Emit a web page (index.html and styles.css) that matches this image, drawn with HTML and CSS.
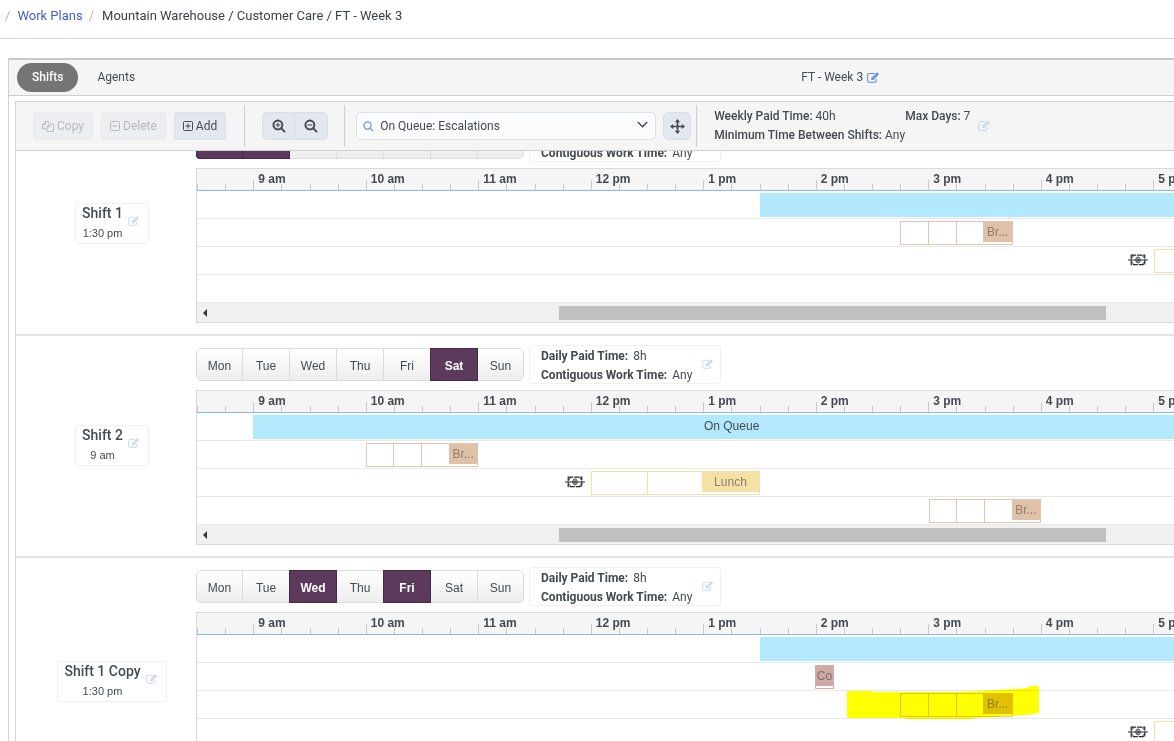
FILE: index.html
```html
<!DOCTYPE html>
<html lang="en">
<head>
<meta charset="utf-8">
<title>Work Plans</title>
<link rel="stylesheet" href="styles.css">
</head>
<body>
<svg class="sprite" aria-hidden="true">
  <symbol id="i-edit" viewBox="0 0 14 12">
    <path d="M10 7.5V9.6a1.6 1.6 0 0 1-1.6 1.6H2.2A1.6 1.6 0 0 1 .6 9.6V3.2A1.6 1.6 0 0 1 2.2 1.6H8" fill="none" stroke="currentColor" stroke-width="1.1"/>
    <path d="M4.6 8.6V6.4L10.2.9a.9.9 0 0 1 1.2 0l1 1a.9.9 0 0 1 0 1.2L6.9 8.6z" fill="currentColor"/>
    <path d="M6 6.8 10 2.8" stroke="#fff" stroke-width=".6"/>
  </symbol>
  <symbol id="i-copy" viewBox="0 0 13 12">
    <path d="M5 8.5H.6V3.6L3.4.6H7v2M.8 3.6h2.8V.8M5.4 11.4V6.2l2.8-2.8h4.2v8zM5.6 6.2h2.8V3.5" fill="none" stroke="currentColor" stroke-width="1"/>
  </symbol>
  <symbol id="i-minus" viewBox="0 0 10 10">
    <path d="M1.5.5h7a1 1 0 0 1 1 1v7a1 1 0 0 1-1 1h-7a1 1 0 0 1-1-1v-7a1 1 0 0 1 1-1zM2.5 5h5" fill="none" stroke="currentColor"/>
  </symbol>
  <symbol id="i-plus" viewBox="0 0 10 10">
    <path d="M1.5.5h7a1 1 0 0 1 1 1v7a1 1 0 0 1-1 1h-7a1 1 0 0 1-1-1v-7a1 1 0 0 1 1-1zM2.5 5h5M5 2.5v5" fill="none" stroke="currentColor"/>
  </symbol>
  <symbol id="i-zoomin" viewBox="0 0 14 14">
    <path d="M10.4 6A4.5 4.5 0 1 1 1.4 6a4.5 4.5 0 0 1 9 0zM9.3 9.3 13 13" fill="none" stroke="currentColor" stroke-width="1.9"/>
    <path d="M3.6 6h4.6M5.9 3.7v4.6" stroke="currentColor" stroke-width="1.1"/>
  </symbol>
  <symbol id="i-zoomout" viewBox="0 0 14 14">
    <path d="M10.4 6A4.5 4.5 0 1 1 1.4 6a4.5 4.5 0 0 1 9 0zM9.3 9.3 13 13" fill="none" stroke="currentColor" stroke-width="1.9"/>
    <path d="M3.6 6h4.6" stroke="currentColor" stroke-width="1.1"/>
  </symbol>
  <symbol id="i-search" viewBox="0 0 12 12">
    <path d="M8.8 5A3.9 3.9 0 1 1 1 5a3.9 3.9 0 0 1 7.8 0zM7.8 7.8 11 11" fill="none" stroke="currentColor" stroke-width="1.6"/>
  </symbol>
  <symbol id="i-chevron" viewBox="0 0 10 6">
    <path d="M.7.7 5 5 9.3.7" fill="none" stroke="currentColor" stroke-width="1.3"/>
  </symbol>
  <symbol id="i-move" viewBox="0 0 14 14">
    <path d="M7 1.5v11M1.5 7h11" stroke="currentColor" stroke-width="1.6"/>
    <path d="M7 0 9.4 3H4.6zM7 14 4.6 11h4.8zM0 7l3-2.4v4.8zM14 7l-3 2.4V4.6z" fill="currentColor"/>
  </symbol>
  <symbol id="i-unpaid" viewBox="0 0 20 12">
    <path d="M3.2 1.2h13.6v9.4H3.2z" fill="#fff" stroke="currentColor" stroke-width="1.2" stroke-dasharray="5 1"/>
    <path d="M3 3.6A2.4 2.4 0 0 0 5.4 1M14.6 1A2.4 2.4 0 0 0 17 3.6M3 8.2a2.4 2.4 0 0 1 2.4 2.6M14.6 10.8A2.4 2.4 0 0 1 17 8.2" fill="none" stroke="currentColor" stroke-width=".8"/>
    <ellipse cx="10" cy="5.9" rx="2.2" ry="3" fill="none" stroke="currentColor" stroke-width=".9"/>
    <path d="M10 4.2v3.6M0 6h20" stroke="currentColor" stroke-width="1.2"/>
  </symbol>
</svg>

<nav class="crumbs" aria-label="Breadcrumb">
  <span class="slash">/</span>
  <a href="#">Work Plans</a>
  <span class="slash">/</span>
  <span class="here">Mountain Warehouse / Customer Care / FT - Week 3</span>
</nav>

<main class="panel">
  <header class="panel-head">
    <div class="tabs">
      <button class="tab active" type="button">Shifts</button>
      <button class="tab" type="button">Agents</button>
    </div>
    <div class="plan-title">FT - Week 3
      <button class="edit strong" type="button" aria-label="Edit name"><svg><use href="#i-edit"/></svg></button>
    </div>
  </header>

  <section class="board">
    <div class="toolbar">
      <div class="actions">
        <button class="btn" type="button" disabled><svg class="copy"><use href="#i-copy"/></svg>Copy</button>
        <button class="btn" type="button" disabled><svg><use href="#i-minus"/></svg>Delete</button>
        <button class="btn" type="button"><svg><use href="#i-plus"/></svg>Add</button>
      </div>
      <div class="zoom-wrap">
        <div class="zoom">
          <button type="button" aria-label="Zoom in"><svg><use href="#i-zoomin"/></svg></button>
          <button type="button" aria-label="Zoom out"><svg><use href="#i-zoomout"/></svg></button>
        </div>
      </div>
      <div class="picker">
        <div class="select">
          <svg class="search"><use href="#i-search"/></svg>
          <select aria-label="Activity"><option>On Queue: Escalations</option></select>
          <svg class="chevron"><use href="#i-chevron"/></svg>
        </div>
        <button class="move" type="button" aria-label="Move"><svg><use href="#i-move"/></svg></button>
      </div>
      <div class="plan-facts">
        <div class="facts">
          <span><b>Weekly Paid Time:</b> 40h</span>
          <span><b>Max Days:</b> 7</span>
          <span class="wide"><b>Minimum Time Between Shifts:</b> Any</span>
        </div>
        <button class="edit" type="button" aria-label="Edit constraints"><svg><use href="#i-edit"/></svg></button>
      </div>
    </div>
    <div class="shifts" id="shifts"></div>
  </section>
</main>
<script src="app.js"></script>
</body>
</html>
```

FILE: styles.css
```css
* { box-sizing: border-box; }

body {
  margin: 0;
  height: 100vh;
  display: flex;
  flex-direction: column;
  overflow: hidden;
  background: #fff;
  color: #444a50;
  font: 12px/16px "Liberation Sans", Arial, sans-serif;
}

button, select { font: inherit; color: inherit; margin: 0; cursor: pointer; }
.sprite { display: none; }
svg { display: block; }

.crumbs {
  display: flex;
  flex: none;
  height: 39px;
  padding: 6px 5px 0;
  border-bottom: 1px solid #d6d6d6;
  font: 13px/20px Roboto, sans-serif;
  color: #3a3f45;
}
.crumbs a { color: #3f5fcf; text-decoration: none; margin: 0 6px 0 7px; }
.crumbs .here { margin-left: 8px; }
.slash { color: #b4b4b4; }

.panel {
  flex: 1;
  min-height: 0;
  display: flex;
  flex-direction: column;
  margin: 19px 0 0 8px;
  border-left: 1px solid #d0d0d0;
  border-top: 2px solid #c9c9c9;
}
.panel-head {
  display: flex;
  flex: none;
  align-items: center;
  height: 36px;
  padding-bottom: 1px;
  background: #f5f5f5;
  border-bottom: 1px solid #cfcfcf;
  font: 12px/16px Roboto, sans-serif;
}
.tabs { display: flex; flex: 0 0 68%; padding-left: 8px; }
.tab { height: 29px; padding: 0 15px; border: 0; border-radius: 15px; background: none; }
.tab + .tab { margin-left: 4px; }
.tab.active { background: #757575; color: #fff; font-weight: 500; }
.plan-title { display: flex; align-items: center; gap: 4px; }

.edit { padding: 0; border: 0; background: none; color: #c9d4ee; }
.edit svg { width: 13px; height: 11px; }
.edit.strong { color: #5b87d8; }

.board {
  flex: 1;
  min-height: 0;
  display: flex;
  flex-direction: column;
  margin: 5px 0 0 6px;
  border-left: 1px solid #d6d6d6;
  border-top: 1px solid #cfcfcf;
}
.toolbar {
  display: flex;
  flex: none;
  align-items: center;
  height: 49px;
  background: #f5f5f5;
  border-bottom: 1px solid #cfcfcf;
  font-family: Roboto, sans-serif;
}
.toolbar > div { display: flex; align-items: center; height: 42px; }
.toolbar > div + div { border-left: 1px solid #cfcfcf; }
.actions { gap: 8px; padding: 0 18px 0 17px; }
.btn {
  display: flex;
  align-items: center;
  gap: 3px;
  height: 28px;
  padding: 0 8px;
  border: 1px solid #dbe1e9;
  border-radius: 3px;
  background: #e3e8ef;
}
.btn svg { width: 10px; height: 10px; }
.btn svg.copy { width: 12px; height: 11px; }
.btn:disabled { color: #b5b8bc; background: #eceef1; border-color: #e8eaee; }
.zoom-wrap { padding: 0 16px 0 17px; }
.zoom { display: flex; }
.zoom button, .move {
  display: grid;
  place-items: center;
  width: 33px;
  height: 28px;
  padding: 0;
  border: 1px solid #d8dfe8;
  background: #e3e8ef;
}
.zoom button:first-child { border-radius: 5px 0 0 5px; }
.zoom button:last-child { border-radius: 0 5px 5px 0; border-left: 0; }
.zoom svg { width: 14px; height: 14px; }
.picker { gap: 7px; padding: 0 5px 0 11px; }
.select { position: relative; }
.select select {
  appearance: none;
  width: 300px;
  height: 28px;
  padding: 0 23px;
  border: 1px solid #dbe3ea;
  border-radius: 5px;
  background: #fafbfd;
}
.select svg { position: absolute; pointer-events: none; }
.search { left: 7px; top: 9px; width: 11px; height: 11px; color: #8fa3bb; }
.chevron { right: 8px; top: 9px; width: 11px; height: 7px; }
.picker .move { width: 28px; border-radius: 5px; }
.move svg { width: 15px; height: 15px; }
.plan-facts { padding: 0 0 2px 17px; gap: 8px; }
.facts { display: grid; grid-template-columns: 191px auto; row-gap: 3px; }
.facts .wide { grid-column: 1 / 3; }
.facts b { font-weight: 500; }

.shifts { flex: 1; min-height: 0; overflow: hidden; }
.shift { display: flex; padding: 12px 0 11px; border-bottom: 2px solid #e4e4e4; }
.shift-side {
  flex: 0 0 180px;
  display: flex;
  align-items: center;
  justify-content: center;
  padding: 0 0 3px 12px;
}
.shift-name {
  display: flex;
  align-items: center;
  gap: 5px;
  padding: 0 8px 0 6px;
  border: 1px solid #f0f0f0;
  border-radius: 3px;
  text-align: center;
}
.shift-name b { display: block; font: 500 14px/19px Roboto, sans-serif; }
.shift-name span { display: block; font: 11px/20px "Liberation Sans", Arial, sans-serif; }
.shift-name .edit, .shift-facts .edit { padding-bottom: 4px; }
.shift-name .edit svg { width: 12px; height: 10px; }
.shift-main { flex: 1; min-width: 0; }
.shift-head { display: flex; align-items: center; gap: 5px; height: 33px; margin-bottom: 9px; }

.days { display: flex; border: 1px solid #dcdcdc; border-radius: 5px; }
.days button {
  width: 47px;
  height: 31px;
  padding: 2px 0 0;
  border: 0;
  border-right: 1px solid #dcdcdc;
  background: linear-gradient(#fff, #ededed);
}
.days button:first-child { width: 46px; border-radius: 4px 0 0 4px; }
.days button:last-child { width: 45px; border-right: 0; border-radius: 0 4px 4px 0; }
.days button[aria-pressed="true"] {
  background: #5b3a5b;
  border-color: #46294a;
  color: #fff;
  font-weight: bold;
  box-shadow: 0 1px #46294a, 0 -1px #46294a, -1px 0 #46294a, -1px 1px #46294a, -1px -1px #46294a;
}
.shift-facts {
  display: flex;
  align-items: center;
  gap: 10px;
  height: 39px;
  margin: -3px 0;
  padding: 2px 6px 0 11px;
  border: 1px solid #f0f0f0;
  border-radius: 3px;
  font: 12px/19px Roboto, sans-serif;
}
.shift-facts div { white-space: nowrap; }
.shift-facts b { margin-right: 2px; }
.shift-facts .edit svg { width: 12px; height: 10px; }

/* The visible window starts at 8:30 and spans 8.68 hours. */
.timeline { --hour: calc(100% / 8.68); border: 1px solid #dadada; border-right: 0; overflow: hidden; }
.ruler {
  display: flex;
  align-items: flex-end;
  height: 22px;
  background: #f5f5f5;
  border-bottom: 1px solid #8fb4f2;
}
.tick { flex: 0 0 calc(100% / 34.72); min-width: 0; height: 6px; border-left: 1px solid #c9c9c9; }
.tick.hour {
  height: 10px;
  padding-left: 4px;
  font-weight: bold;
  white-space: nowrap;
}
.tick.hour span { display: block; line-height: 16px; margin-top: -9px; }
.row { position: relative; height: 28px; border-bottom: 1px solid #e8e8e8; }
.bar {
  position: absolute;
  top: 2px;
  height: 24px;
  left: calc(var(--at) * var(--hour));
  width: calc(var(--for) * var(--hour));
  display: flex;
  white-space: nowrap;
  text-align: center;
}
.queue { background: #b3e9fc; line-height: 23px; justify-content: center; }
.flex-bar { border: 1px solid var(--edge); line-height: 20px; color: #8c806c; }
.flex-bar i { flex: 1 1 0; border-right: 1px solid var(--edge); }
.flex-bar i:last-of-type { border-right: 0; }
.flex-bar span { flex: 1 1 2px; min-width: 0; height: 20px; background: var(--fill); }
.break { --edge: #e3c4af; --fill: #dfc1aa; }
.lunch { --edge: #f4dfa6; --fill: #f5e0a6; }
.coach { --edge: #d0ada7; --fill: #cfaaa4; color: #876b68; }
.unpaid { position: absolute; right: calc(100% + 7px); top: 4px; width: 20px; height: 12px; color: #24292e; }
.marker {
  position: absolute;
  z-index: 1;
  top: -5px;
  left: calc(5.775 * var(--hour));
  width: calc(1.71 * var(--hour));
  height: 33px;
  mix-blend-mode: multiply;
}
.scroll { display: flex; align-items: center; height: 19px; background: #f0f0f0; }
.scroll::before {
  content: "";
  width: 0;
  margin-left: 6px;
  border: 4px solid transparent;
  border-left: 0;
  border-right: 4px solid #333;
}
.thumb { width: 56%; height: 14px; margin-left: 36%; background: #c0c0c0; }
```

FILE: app.js
```js
const DAYS = ['Mon', 'Tue', 'Wed', 'Thu', 'Fri', 'Sat', 'Sun'];
const HOURS = ['9 am', '10 am', '11 am', '12 pm', '1 pm', '2 pm', '3 pm', '4 pm', '5 pm'];

const SHIFTS = [
  { name: 'Shift 1', start: '1:30 pm', days: ['Mon', 'Tue'], rows: [
    { type: 'queue', at: 5, len: 8.5, label: 'On Queue' },
    { type: 'break', at: 6.25, len: 1, slots: 3, label: 'Br...' },
    { type: 'lunch', at: 8.5, len: 1.5, slots: 2, label: 'Lunch', unpaid: true },
    null ] },
  { name: 'Shift 2', start: '9 am', days: ['Sat'], rows: [
    { type: 'queue', at: 0.5, len: 8.5, label: 'On Queue' },
    { type: 'break', at: 1.5, len: 1, slots: 3, label: 'Br...' },
    { type: 'lunch', at: 3.5, len: 1.5, slots: 2, label: 'Lunch', unpaid: true },
    { type: 'break', at: 6.5, len: 1, slots: 3, label: 'Br...' } ] },
  { name: 'Shift 1 Copy', start: '1:30 pm', days: ['Wed', 'Fri'], rows: [
    { type: 'queue', at: 5, len: 8.5, label: 'On Queue' },
    { type: 'coach', at: 5.49, len: 0.17, slots: 0, label: 'Co' },
    { type: 'break', at: 6.25, len: 1, slots: 3, label: 'Br...', marked: true },
    { type: 'lunch', at: 8.5, len: 1.5, slots: 2, label: 'Lunch', unpaid: true },
    null ] }
];

const edit = label =>
  `<button class="edit" type="button" aria-label="${label}"><svg><use href="#i-edit"/></svg></button>`;

function ruler() {
  let out = '';
  for (let q = 0; q < 36; q++) {
    const hour = q % 4 === 2 ? HOURS[(q - 2) / 4] : null;
    out += hour ? `<div class="tick hour"><span>${hour}</span></div>` : '<div class="tick"></div>';
  }
  return `<div class="ruler">${out}</div>`;
}

function row(r) {
  if (!r) return '<div class="row"></div>';
  const style = `style="--at:${r.at};--for:${r.len}"`;
  const bar = r.type === 'queue'
    ? `<div class="bar queue" ${style}>${r.label}</div>`
    : `<div class="bar flex-bar ${r.type}" ${style}>${'<i></i>'.repeat(r.slots)}<span>${r.label}</span>${
        r.unpaid ? '<svg class="unpaid"><use href="#i-unpaid"/></svg>' : ''}</div>`;
  const mark = r.marked
    ? `<svg class="marker" viewBox="0 0 192 33" preserveAspectRatio="none"><path fill="#ff0" d="M0 5H25V6H83L110 6 134 5 148 4 169 3 180 2 183 0H192V27L181 29 158 30 145 31 125 32V33H59V32H0z"/></svg>`
    : '';
  return `<div class="row">${bar}${mark}</div>`;
}

const list = document.getElementById('shifts');
list.innerHTML = SHIFTS.map(s => `
  <article class="shift">
    <div class="shift-side">
      <div class="shift-name"><div><b>${s.name}</b><span>${s.start}</span></div>${edit('Edit ' + s.name)}</div>
    </div>
    <div class="shift-main">
      <div class="shift-head">
        <div class="days">${DAYS.map(d =>
          `<button type="button" aria-pressed="${s.days.includes(d)}">${d}</button>`).join('')}</div>
        <div class="shift-facts">
          <div><div><b>Daily Paid Time:</b> 8h</div><div><b>Contiguous Work Time:</b> Any</div></div>
          ${edit('Edit daily times')}
        </div>
      </div>
      <div class="timeline">${ruler()}${s.rows.map(row).join('')}<div class="scroll"><div class="thumb"></div></div></div>
    </div>
  </article>`).join('');
list.scrollTop = 37;
```
